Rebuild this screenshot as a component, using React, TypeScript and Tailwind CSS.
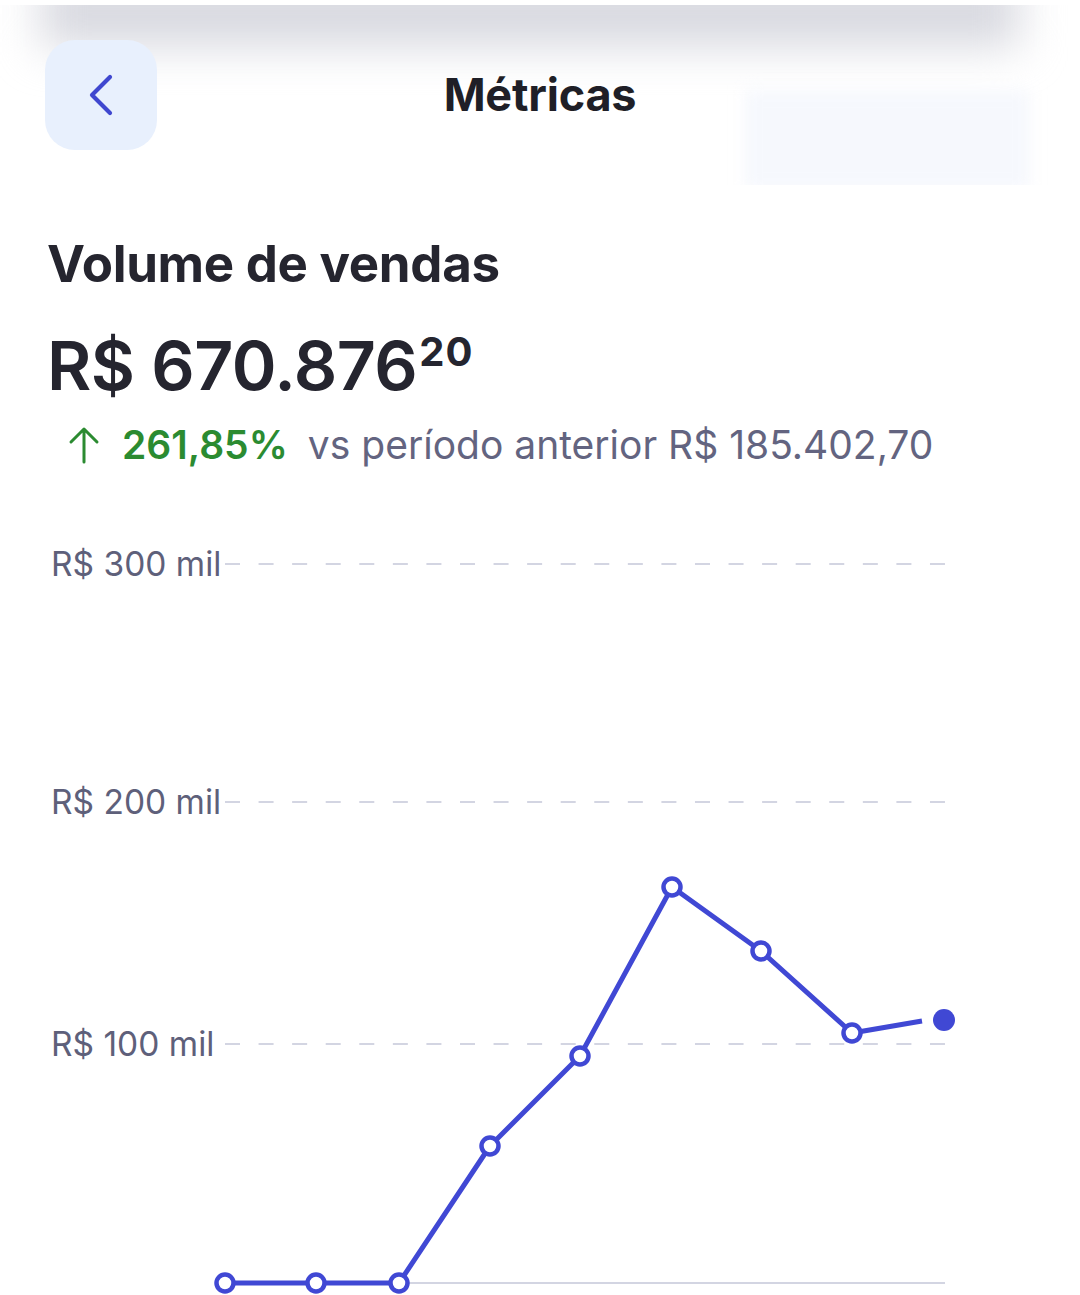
import { ChevronLeft } from 'lucide-react';

const CHART_TOP = 530;

const points = [
    { x: 225, y: 1283 },
    { x: 316, y: 1283 },
    { x: 399, y: 1283 },
    { x: 490, y: 1146 },
    { x: 580, y: 1056 },
    { x: 672, y: 887 },
    { x: 761, y: 951 },
    { x: 852, y: 1033 },
];

const current = { x: 944, y: 1020 };

function GridRow({ label }: { label: string }) {
    return (
        <div className="relative h-[40px] flex items-center">
            <span className="text-[33.5px] leading-[40px] text-[#5e607a] pl-[4px]">{label}</span>
            <svg className="absolute left-[178px] top-[19px]" width="720" height="2">
                <line x1="0" y1="1" x2="720" y2="1" stroke="#d3d5e2" strokeWidth="2" strokeDasharray="15 18.57" />
            </svg>
        </div>
    );
}

export default function App() {
    const path = points.map((p, i) => `${i === 0 ? 'M' : 'L'}${p.x} ${p.y - CHART_TOP}`).join(' ') +
        ` L922 ${1021 - CHART_TOP}`;

    return (
        <div className="w-[1080px] h-[1295px] bg-white overflow-hidden relative font-['Inter',sans-serif]">
            {/* Header */}
            <div className="relative h-[185px] bg-white">
                <div className="absolute left-0 right-0 top-[5px] h-[180px] overflow-hidden">
                    <div className="absolute left-[40px] right-[60px] top-[-30px] h-[72px] bg-[#d8d9e0] blur-[22px]" />
                    <div className="absolute right-[50px] top-[85px] w-[285px] h-[100px] bg-[#f6f8fd] blur-[8px]" />
                </div>
                <div className="relative grid grid-cols-[112px_1fr_112px] items-center px-[45px] pt-[40px]">
                    <button className="w-[112px] h-[110px] rounded-[30px] bg-[#e8f0fd] flex items-center justify-center">
                        <ChevronLeft size={72} strokeWidth={1.4} className="text-[#3f47cf]" />
                    </button>
                    <h1 className="text-center text-[45px] font-bold text-[#1f1f27] tracking-[-0.2px]">Métricas</h1>
                    <div />
                </div>
            </div>

            {/* Summary */}
            <div className="px-[47px]">
                <h2 className="mt-[50px] text-[51px] leading-[58px] font-bold text-[#25252f] tracking-[-0.3px]">Volume de vendas</h2>
                <div className="mt-[32px] flex items-start leading-[80px] text-[#25252f]">
                    <span className="text-[68px] font-semibold tracking-[-0.5px]">R$ 670.876</span>
                    <span className="text-[40px] leading-[54px] font-bold ml-[2px] tracking-[1px]">20</span>
                </div>
                <div className="mt-[16px] flex items-center h-[48px] text-[39px] pl-[21px]">
                    <svg width="32" height="38" viewBox="0 0 32 38" className="mr-[22px]">
                        <path d="M16 3 V36 M3 16 L16 3 L29 16" fill="none" stroke="#2b8b31" strokeWidth="3" strokeLinecap="round" strokeLinejoin="round" />
                    </svg>
                    <span className="font-semibold text-[#2b8b31]">261,85%</span>
                    <span className="ml-[20px] text-[#636480]">vs período anterior R$ 185.402,70</span>
                </div>
            </div>

            {/* Chart */}
            <div className="relative mt-[61px] h-[765px] px-[47px] flex flex-col">
                <div className="mt-[14px]">
                    <GridRow label="R$ 300 mil" />
                </div>
                <div className="mt-[198px]">
                    <GridRow label="R$ 200 mil" />
                </div>
                <div className="mt-[202px]">
                    <GridRow label="R$ 100 mil" />
                </div>
                <div className="mt-[218px] ml-[178px] w-[720px] h-[2px] bg-[#d3d5e2]" />

                <svg className="absolute left-0 top-0" width="1080" height="765" viewBox="0 0 1080 765">
                    <path d={path} fill="none" stroke="#4048d4" strokeWidth="5" strokeLinejoin="round" />
                    {points.map((p) => (
                        <circle key={p.x} cx={p.x} cy={p.y - CHART_TOP} r="8.5" fill="#fff" stroke="#4048d4" strokeWidth="4.5" />
                    ))}
                    <circle cx={current.x} cy={current.y - CHART_TOP} r="11" fill="#4048d4" />
                </svg>
            </div>
        </div>
    );
}
